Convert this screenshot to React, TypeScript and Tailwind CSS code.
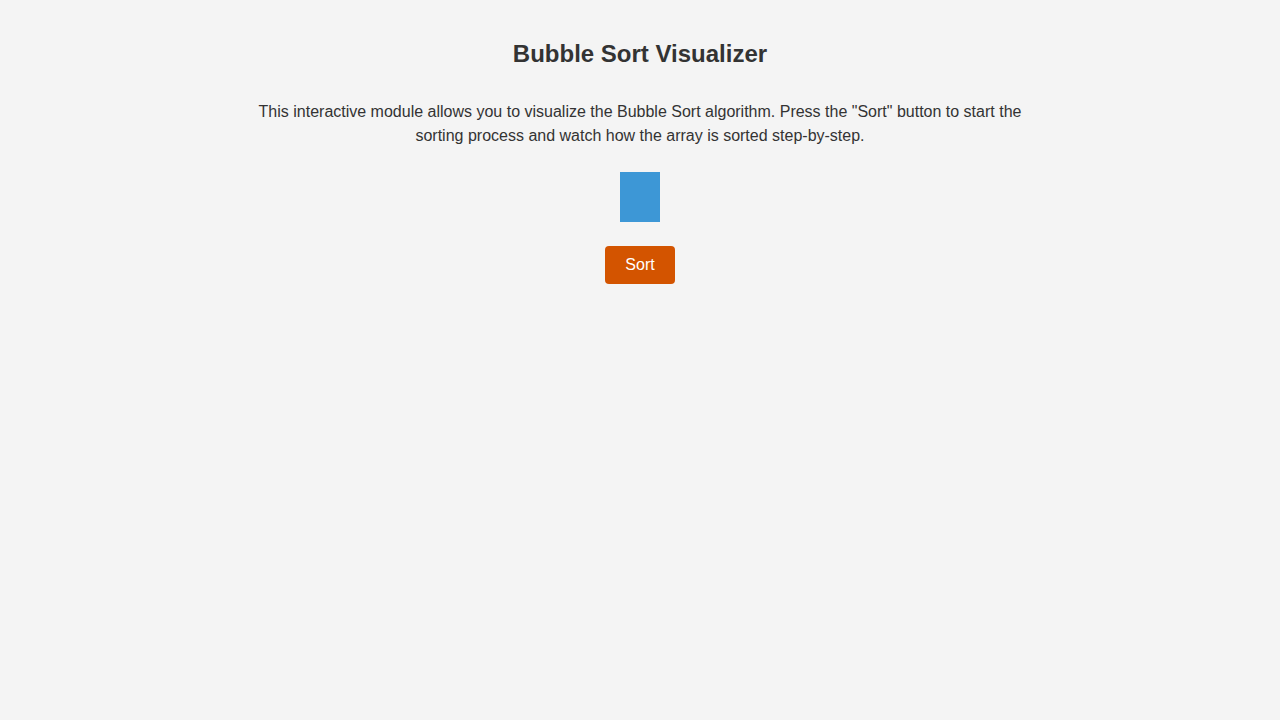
export default function App() {
  return (
    <div className="min-h-screen w-full bg-[#f4f4f4] text-[#333] flex flex-col items-center" style={{ fontFamily: '"Liberation Sans", Arial, sans-serif' }}>
      <h1 className="mt-[40px] text-[24px] font-bold leading-[28px]">Bubble Sort Visualizer</h1>
      <p className="mt-[32px] max-w-[780px] text-center text-[16px] leading-[24px]">
        This interactive module allows you to visualize the Bubble Sort algorithm. Press the "Sort" button to start the sorting process and watch how the array is sorted step-by-step.
      </p>
      <div className="mt-[24px] flex items-end gap-[2px] h-[50px]">
        <div className="w-[40px] h-[50px] bg-[#3d97d6]" />
      </div>
      <button className="mt-[24px] w-[70px] h-[38px] rounded-[4px] bg-[#d35400] text-white text-[16px]">Sort</button>
    </div>
  );
}
